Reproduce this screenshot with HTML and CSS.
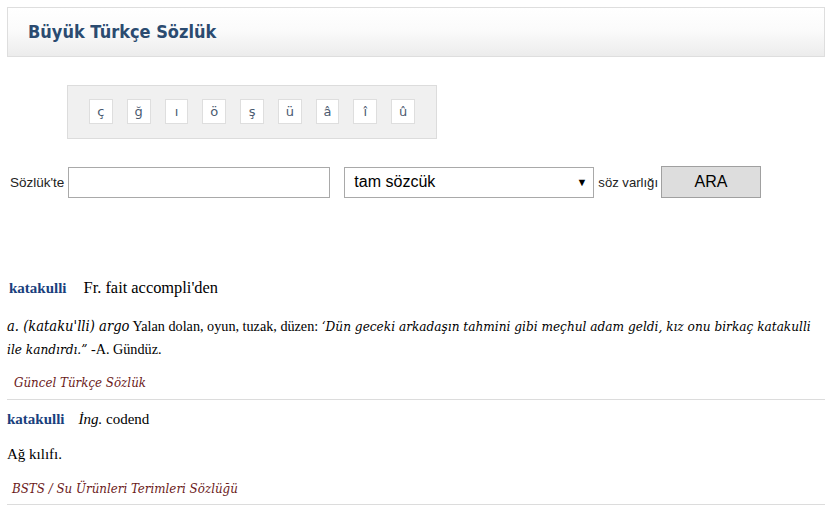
FILE: index.html
```html
<!DOCTYPE html>
<html lang="tr">
<head>
<meta charset="utf-8">
<title>Büyük Türkçe Sözlük</title>
<link rel="stylesheet" href="styles.css">
</head>
<body>
<div class="header"><h1>Büyük Türkçe Sözlük</h1></div>

<div class="letters">
  <span class="key">ç</span><span class="key">ğ</span><span class="key">ı</span><span class="key">ö</span><span class="key">ş</span><span class="key">ü</span><span class="key">â</span><span class="key">î</span><span class="key">û</span>
</div>

<form class="search">
  <label class="lbl">Sözlük'te</label>
  <input class="field" type="text">
  <div class="select"><span>tam sözcük</span><span class="arrow">▼</span></div>
  <span class="lbl lbl2">söz varlığı</span>
  <button class="btn" type="button">ARA</button>
</form>

<div class="results">
  <div class="entry">
    <p class="head first"><b class="word">katakulli</b><span class="origin">Fr. fait accompli'den</span></p>
    <p class="def"><i class="gram">a. (kataku'lli) argo</i> Yalan dolan, oyun, tuzak, düzen: <i class="quote">‘Dün geceki arkadaşın tahmini gibi meçhul adam geldi, kız onu birkaç katakulli ile kandırdı.”</i> -A. Gündüz.</p>
    <p class="src first-src">Güncel Türkçe Sözlük</p>
  </div>
  <div class="entry">
    <p class="head"><b class="word">katakulli</b><span class="origin2"><i>İng.</i> codend</span></p>
    <p class="def2">Ağ kılıfı.</p>
    <p class="src">BSTS / Su Ürünleri Terimleri Sözlüğü</p>
  </div>
</div>
</body>
</html>
```

FILE: styles.css
```css
html, body { margin: 0; padding: 0; background: #fff; }
body { padding: 7px 4px 0 7px; font-family: "Liberation Serif", serif; color: #000; }

.header {
  height: 48px;
  border: 1px solid #dedede;
  background: linear-gradient(#fff 0%, #fbfbfb 45%, #ececec 100%);
  display: flex;
  align-items: center;
  padding-left: 20px;
}
.header h1 {
  margin: 0;
  font-family: "DejaVu Sans Condensed", "DejaVu Sans", sans-serif;
  font-weight: bold;
  font-size: 18px;
  color: #2b4b70;
  position: relative;
  top: -1px;
}

.letters {
  margin: 28px 0 0 60px;
  width: 326px;
  height: 25px;
  padding: 13px 21px 14px 21px;
  background: #f0f0f0;
  border: 1px solid #dcdcdc;
  display: flex;
  gap: 14px;
}
.key {
  width: 23px;
  height: 23px;
  border: 1px solid #dedede;
  background: #fff;
  display: flex;
  align-items: center;
  justify-content: center;
  font-family: "DejaVu Sans", sans-serif;
  font-size: 13px;
  color: #4a5a70;
}

.search {
  margin-top: 27px;
  display: flex;
  align-items: center;
  font-family: "Liberation Sans", sans-serif;
}
.lbl { font-size: 13.5px; color: #222; }
.lbl2 { font-size: 13.1px; }
.search > .lbl:first-child { margin-left: 3px; margin-right: 4px; }
.field {
  width: 262px;
  height: 31px;
  box-sizing: border-box;
  border: 1px solid #a9a9a9;
  margin: 0 14px 0 0;
  padding: 0;
}
.select {
  width: 250px;
  height: 31px;
  box-sizing: border-box;
  border: 1px solid #a9a9a9;
  display: flex;
  align-items: center;
  justify-content: space-between;
  padding: 0 6px 0 9px;
  font-size: 16px;
  color: #000;
  margin-right: 4px;
}
.arrow { font-size: 11px; }
.btn {
  margin-left: 3px;
  width: 100px;
  height: 32px;
  background: #dddddd;
  border: 1px solid #a0a0a0;
  font-family: "Liberation Sans", sans-serif;
  font-size: 16px;
  color: #000;
  padding: 0;
}

.results { margin-top: 80px; font-size: 15px; }
.entry { border-bottom: 1px solid #dcdcdc; }
.entry p { margin: 0; }
.word { color: #1a3f7d; font-weight: bold; }
.head { line-height: 20px; }
.head.first { padding-left: 2px; margin-top: 3px; }
.origin { margin-left: 17px; font-size: 16.4px; }
.origin2 { margin-left: 14px; }
.def { margin-top: 16px !important; line-height: 23px; font-size: 14.2px; }
.def i { font-family: "DejaVu Serif Condensed", "DejaVu Serif", serif; }
.def .gram { font-size: 14.6px; }
.def .quote { font-size: 13.5px; }
.def2 { margin-top: 15px !important; line-height: 20px; }
.src {
  font-family: "DejaVu Serif Condensed", "DejaVu Serif", serif;
  font-style: italic;
  font-size: 13.2px;
  color: #6b1a1a;
  padding-left: 5px;
  margin-top: 12px !important;
  line-height: 20px;
  padding-bottom: 6px;
}
.first-src { padding-left: 7px; }
.entry + .entry .head { margin-top: 9px; }
.entry + .entry .src { margin-top: 15px !important; padding-bottom: 5px; }
```
